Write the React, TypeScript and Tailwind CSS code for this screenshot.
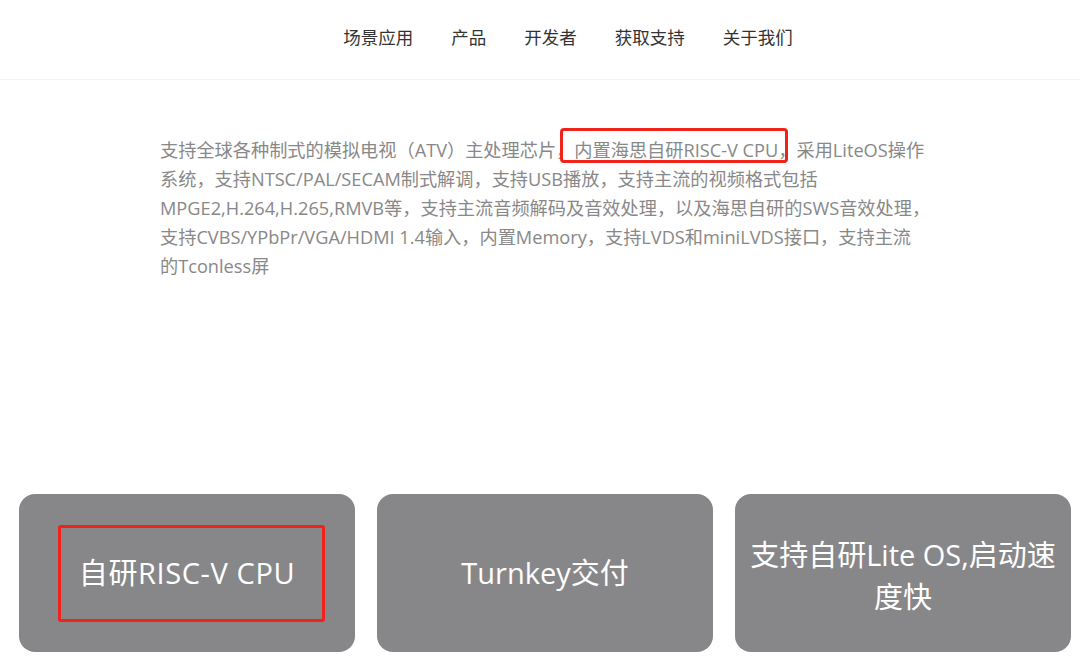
const navItems = ['场景应用', '产品', '开发者', '获取支持', '关于我们'];

const font = { fontFamily: '"Open Sans", "Noto Sans CJK SC", sans-serif' };

export default function App() {
  return (
    <div className="h-[664px] overflow-hidden bg-white" style={font}>
      <header className="h-[80px] border-b border-[#f3f3f3] flex items-center justify-center">
        <nav className="flex gap-[38px] text-[17.5px] text-[#333] ml-[56px] -mt-[4px]">
          {navItems.map((item) => (
            <span key={item}>{item}</span>
          ))}
        </nav>
      </header>

      <section className="pt-[56px] pl-[160px]">
        <p className="w-[880px] whitespace-nowrap text-[18.2px] leading-[29px] text-[#888]">
          支持全球各种制式的模拟电视（ATV）主处理芯片，
          <span className="relative">
            内置海思自研RISC-V CPU
            <span className="absolute -left-[14px] -right-[10px] -top-[10px] -bottom-[1px] border-[3px] border-[#f0221a] rounded-[4px]" />
          </span>
          ，采用LiteOS操作
          <br />
          系统，支持NTSC/PAL/SECAM制式解调，支持USB播放，支持主流的视频格式包括
          <br />
          MPGE2,H.264,H.265,RMVB等，支持主流音频解码及音效处理，以及海思自研的SWS音效处理，
          <br />
          支持CVBS/YPbPr/VGA/HDMI 1.4输入，内置Memory，支持LVDS和miniLVDS接口，支持主流
          <br />
          的Tconless屏
        </p>
      </section>

      <section className="mt-[213px] pl-[19px] pr-[9px] grid grid-cols-3 gap-[22px]">
        <div className="relative h-[158px] rounded-[16px] bg-[#878789] flex items-center justify-center text-white text-[29px] leading-[42px] tracking-[0.6px]">
          自研RISC-V CPU
          <span className="absolute left-[39px] top-[31px] w-[267px] h-[97px] border-[3px] border-[#f0221a] rounded-[3px]" />
        </div>
        <div className="h-[158px] rounded-[16px] bg-[#878789] flex items-center justify-center text-white text-[29px] leading-[42px]">
          Turnkey交付
        </div>
        <div className="h-[158px] rounded-[16px] bg-[#878789] flex items-center justify-center text-center text-white text-[29px] leading-[42px] px-[10px] pt-[5px]">
          <span>
            支持自研Lite OS,启动速
            <br />
            度快
          </span>
        </div>
      </section>
    </div>
  );
}
